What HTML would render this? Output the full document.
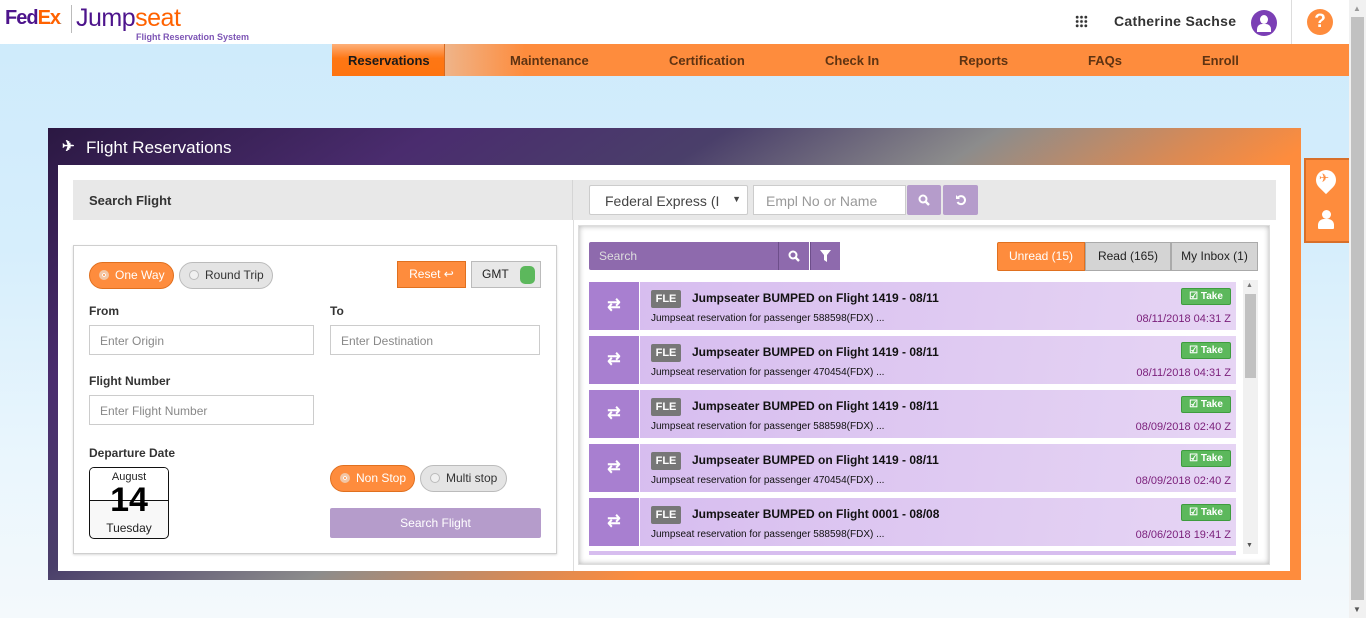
<!DOCTYPE html>
<html><head><meta charset="utf-8"><style>
*{box-sizing:border-box;margin:0;padding:0}
body{width:1366px;height:618px;overflow:hidden;font-family:"Liberation Sans",Arial,sans-serif;font-size:13px;color:#222;position:relative;background:linear-gradient(180deg,#cdeafb 0%,#d6eefc 40%,#eaf6fd 75%,#f4f9fc 100%)}
.hdr{position:absolute;left:0;top:0;width:1349px;height:44px;background:#fff}
.sb{position:absolute;left:1349px;top:0;width:17px;height:618px;background:#f1f1f1}
.sb .th{position:absolute;left:2px;top:17px;width:13px;height:583px;background:#c1c1c1}
.nav{position:absolute;left:332px;top:44px;width:1017px;height:32px;background:#fe8c3d}
.nav span{position:absolute;top:9px;font-size:13px;font-weight:bold;color:#5e3312}
.nav .act{position:absolute;left:0;top:0;width:113px;height:32px;background:linear-gradient(180deg,#fdb07a,#fe7714 45%,#fe7410);border-right:1px solid #d76a20}
.nav .fade{position:absolute;left:113px;top:0;width:80px;height:32px;background:linear-gradient(90deg,#efb489,#fe8c3d)}
.panel{position:absolute;left:48px;top:128px;width:1253px;height:452px;background:linear-gradient(147deg,#2b1842 0%,#4a2c6e 20%,#4a3f6a 35%,#8c8c8c 49%,#d98a55 60%,#fe8c3d 66%)}
.white{position:absolute;left:10px;top:37px;width:1232px;height:406px;background:#fff}
.lh{position:absolute;left:25px;top:52px;width:500px;height:40px;background:#e8e8e8;border-right:1px solid #d5d5d5}
.rh{position:absolute;left:525px;top:52px;width:703px;height:40px;background:#e8e8e8}
.lline{position:absolute;left:525px;top:92px;width:1px;height:351px;background:#ddd}
.form{position:absolute;left:73px;top:245px;width:484px;height:309px;background:#fff;border:1px solid #cfcfcf;box-shadow:0 1px 2px rgba(0,0,0,.15)}
.abs{position:absolute}
.pill{position:absolute;height:27px;border-radius:14px;font-size:12px;line-height:25px}
.po{background:#fe8c3d;border:1px solid #e0701f;color:#fff}
.pg{background:#e4e4e4;border:1px solid #bbb;color:#333}
.rad{display:inline-block;width:10px;height:10px;border-radius:50%;vertical-align:-1px;margin:0 6px 0 9px}
.po .rad{border:3px solid #f2c6a5;background:#fe8c3d;box-shadow:0 0 0 1px #fff inset}
.pg .rad{background:#f0f0f0;border:1px solid #bbb}
.lbl{position:absolute;font-size:12px;font-weight:bold;color:#333}
.inp{position:absolute;height:30px;border:1px solid #ccc;font-size:12px;color:#888;padding:8px 10px}
.inner{position:absolute;left:578px;top:225px;width:692px;height:340px;background:#fff;box-shadow:inset 0 0 6px rgba(0,0,0,.3);border:1px solid #ddd}
.msg{position:absolute;left:589px;width:647px;height:48px}
.msg .ic{position:absolute;left:0;top:0;width:50px;height:48px;background:#a87fd0;color:#fff;font-size:16px;text-align:center;line-height:48px;font-weight:bold}
.msg .bd{position:absolute;left:51px;top:0;width:596px;height:48px;background:linear-gradient(100deg,#d7bdef,#e6d5f4)}
.fle{position:absolute;left:11px;top:8px;width:30px;height:18px;background:#777;color:#fff;font-size:11px;font-weight:bold;text-align:center;line-height:18px;border-radius:2px}
.tt{position:absolute;left:52px;top:9px;font-size:12px;font-weight:bold;color:#111}
.st{position:absolute;left:11px;top:31px;font-size:10px;color:#111}
.dt{position:absolute;right:5px;top:31px;font-size:11px;color:#7a1e7a}
.tk{position:absolute;right:5px;top:6px;width:50px;height:17px;background:#5cb85c;border:1px solid #3e9c3e;color:#fff;font-size:10px;font-weight:bold;text-align:center;line-height:15px;border-radius:2px}
</style></head><body>
<div class="hdr">
 <div class="abs" style="left:5px;top:7px;font-size:20px;font-weight:bold;letter-spacing:-1px;color:#4d148c">Fed<span style="color:#ff6200">Ex</span><span style="font-size:6px;color:#999">.</span></div>
 <div class="abs" style="left:71px;top:5px;width:1px;height:28px;background:#bbb"></div>
 <div class="abs" style="left:76px;top:4px;font-size:25px;color:#4d148c;letter-spacing:-0.5px">Jump<span style="color:#ff6200">seat</span></div>
 <div class="abs" style="left:136px;top:32px;font-size:9px;font-weight:bold;color:#7d55b5">Flight Reservation System</div>
 <div class="abs" style="left:1075px;top:15px;width:13px;height:13px;background:radial-gradient(circle,#333 1.3px,transparent 1.6px) 0 0/4.33px 4.33px"></div>
 <div class="abs" style="left:1114px;top:13px;font-size:14px;font-weight:bold;color:#333;letter-spacing:.3px">Catherine Sachse</div>
 <div class="abs" style="left:1251px;top:10px;width:26px;height:26px;border-radius:50%;background:#7b3fb5;overflow:hidden"><div class="abs" style="left:9px;top:5px;width:8px;height:9px;border-radius:50%;background:#fff"></div><div class="abs" style="left:6px;top:14px;width:14px;height:8px;border-radius:5px 5px 0 0;background:#fff"></div></div>
 <div class="abs" style="left:1291px;top:0;width:1px;height:44px;background:#ddd"></div>
 <div class="abs" style="left:1307px;top:9px;width:26px;height:26px;border-radius:50%;background:#fe8c3d;color:#fff;font-weight:bold;font-size:19px;text-align:center;line-height:26px">?</div>
</div>
<div class="nav">
 <div class="act"></div><div class="fade"></div>
 <span style="left:16px;color:#1a1a1a">Reservations</span>
 <span style="left:178px">Maintenance</span>
 <span style="left:337px">Certification</span>
 <span style="left:493px">Check In</span>
 <span style="left:627px">Reports</span>
 <span style="left:756px">FAQs</span>
 <span style="left:870px">Enroll</span>
</div>
<div class="panel">
 <div class="abs" style="left:14px;top:9px;color:#fff;font-size:15px;font-weight:bold">✈</div>
 <div class="abs" style="left:38px;top:10px;color:#fff;font-size:17px">Flight Reservations</div>
 <div class="white"></div>
 <div class="lh"><div class="abs" style="left:16px;top:13px;font-size:13px;font-weight:bold;color:#333">Search Flight</div></div>
 <div class="rh"></div>
 <div class="lline"></div>
</div>
<div class="abs" style="left:589px;top:185px;width:159px;height:30px;background:#fff;border:1px solid #ccc;font-size:14px;color:#444;padding:7px 15px;border-radius:2px">Federal Express (I<span class="abs" style="right:6px;top:8px;font-size:9px">▼</span></div>
<div class="abs" style="left:753px;top:185px;width:153px;height:30px;background:#fff;border:1px solid #ccc;font-size:14px;color:#999;padding:7px 12px">Empl No or Name</div>
<div class="abs" style="left:907px;top:185px;width:34px;height:30px;background:#b59ccb;border-radius:2px"><svg class="abs" style="left:11px;top:9px" width="12" height="12" viewBox="0 0 12 12"><circle cx="5" cy="5" r="3.5" fill="none" stroke="#fff" stroke-width="2"/><path d="M7.5 7.5L11 11" stroke="#fff" stroke-width="2.4"/></svg></div>
<div class="abs" style="left:943px;top:185px;width:35px;height:30px;background:#b59ccb;border-radius:2px"><svg class="abs" style="left:12px;top:9px" width="12" height="12" viewBox="0 0 12 12"><path d="M3 3.5A4 4 0 1 1 2.5 8" fill="none" stroke="#fff" stroke-width="2"/><path d="M1 1v4h4z" fill="#fff"/></svg></div>
<div class="form"></div>
<div class="pill po" style="left:89px;top:262px;width:85px"><span class="rad"></span>One Way</div>
<div class="pill pg" style="left:179px;top:262px;width:94px"><span class="rad"></span>Round Trip</div>
<div class="abs" style="left:397px;top:261px;width:69px;height:27px;background:#fe8c3d;border:1px solid #e0701f;color:#fff;font-size:12px;text-align:center;line-height:25px">Reset ↩</div>
<div class="abs" style="left:471px;top:261px;width:70px;height:27px;background:#e8e8e8;border:1px solid #bbb;font-size:12px;line-height:25px;padding-left:10px;color:#222">GMT<span class="abs" style="left:48px;top:4px;width:15px;height:18px;border-radius:5px;background:#5cb85c"></span></div>
<div class="lbl" style="left:89px;top:304px">From</div>
<div class="lbl" style="left:330px;top:304px">To</div>
<div class="inp" style="left:89px;top:325px;width:225px">Enter Origin</div>
<div class="inp" style="left:330px;top:325px;width:210px">Enter Destination</div>
<div class="lbl" style="left:89px;top:374px">Flight Number</div>
<div class="inp" style="left:89px;top:395px;width:225px">Enter Flight Number</div>
<div class="lbl" style="left:89px;top:446px">Departure Date</div>
<div class="abs" style="left:89px;top:467px;width:80px;height:72px;border:1px solid #111;border-radius:5px;background:#f8f8f8;text-align:center;overflow:hidden">
 <div class="abs" style="left:0;top:0;width:78px;height:33px;background:#fff;border-bottom:1px solid #111"></div>
 <div class="abs" style="left:0;top:3px;width:78px;font-size:11px">August</div>
 <div class="abs" style="left:0;top:16px;width:78px;font-size:34px;font-weight:900;color:#000;line-height:32px">14</div>
 <div class="abs" style="left:0;top:53px;width:78px;font-size:12px">Tuesday</div>
</div>
<div class="pill po" style="left:330px;top:465px;width:85px"><span class="rad"></span>Non Stop</div>
<div class="pill pg" style="left:420px;top:465px;width:87px"><span class="rad"></span>Multi stop</div>
<div class="abs" style="left:330px;top:508px;width:211px;height:30px;background:#b59ccb;border-radius:2px;color:#fff;font-size:12px;text-align:center;line-height:30px">Search Flight</div>

<div class="inner"></div>
<div class="abs" style="left:589px;top:242px;width:189px;height:28px;background:#8e6aad;color:#ddd;font-size:12px;padding:7px 10px;border-radius:2px 0 0 2px">Search</div>
<div class="abs" style="left:778px;top:242px;width:31px;height:28px;background:#8e6aad;border-left:1px solid #6d4e8a"><svg class="abs" style="left:9px;top:8px" width="12" height="12" viewBox="0 0 12 12"><circle cx="5" cy="5" r="3.5" fill="none" stroke="#fff" stroke-width="2"/><path d="M7.5 7.5L11 11" stroke="#fff" stroke-width="2.4"/></svg></div>
<div class="abs" style="left:810px;top:242px;width:30px;height:28px;background:#8e6aad;border-left:1px solid #6d4e8a"><svg class="abs" style="left:9px;top:8px" width="11" height="12" viewBox="0 0 11 12"><path d="M0 0h11L7 5v7L4 10V5z" fill="#fff"/></svg></div>
<div class="abs" style="left:997px;top:242px;width:88px;height:29px;background:#fe8c3d;border:1px solid #e0701f;color:#fff;font-size:12px;text-align:center;line-height:27px;border-radius:2px 0 0 2px">Unread (15)</div>
<div class="abs" style="left:1085px;top:242px;width:86px;height:29px;background:#d4d4d4;border:1px solid #aaa;color:#222;font-size:12px;text-align:center;line-height:27px">Read (165)</div>
<div class="abs" style="left:1171px;top:242px;width:87px;height:29px;background:#d4d4d4;border:1px solid #aaa;color:#222;font-size:12px;text-align:center;line-height:27px">My Inbox (1)</div>

<div class="msg" style="top:282px"><div class="ic">⇄</div><div class="bd"><div class="fle">FLE</div><div class="tt">Jumpseater BUMPED on Flight 1419 - 08/11</div><div class="st">Jumpseat reservation for passenger 588598(FDX) ...</div><div class="dt">08/11/2018 04:31 Z</div><div class="tk">☑ Take</div></div></div>
<div class="msg" style="top:336px"><div class="ic">⇄</div><div class="bd"><div class="fle">FLE</div><div class="tt">Jumpseater BUMPED on Flight 1419 - 08/11</div><div class="st">Jumpseat reservation for passenger 470454(FDX) ...</div><div class="dt">08/11/2018 04:31 Z</div><div class="tk">☑ Take</div></div></div>
<div class="msg" style="top:390px"><div class="ic">⇄</div><div class="bd"><div class="fle">FLE</div><div class="tt">Jumpseater BUMPED on Flight 1419 - 08/11</div><div class="st">Jumpseat reservation for passenger 588598(FDX) ...</div><div class="dt">08/09/2018 02:40 Z</div><div class="tk">☑ Take</div></div></div>
<div class="msg" style="top:444px"><div class="ic">⇄</div><div class="bd"><div class="fle">FLE</div><div class="tt">Jumpseater BUMPED on Flight 1419 - 08/11</div><div class="st">Jumpseat reservation for passenger 470454(FDX) ...</div><div class="dt">08/09/2018 02:40 Z</div><div class="tk">☑ Take</div></div></div>
<div class="msg" style="top:498px"><div class="ic">⇄</div><div class="bd"><div class="fle">FLE</div><div class="tt">Jumpseater BUMPED on Flight 0001 - 08/08</div><div class="st">Jumpseat reservation for passenger 588598(FDX) ...</div><div class="dt">08/06/2018 19:41 Z</div><div class="tk">☑ Take</div></div></div>
<div class="abs" style="left:589px;top:551px;width:647px;height:4px;background:#d7bdef"></div>
<div class="abs" style="left:1243px;top:280px;width:15px;height:274px;background:#f1f1f1"><div class="abs" style="left:2px;top:14px;width:11px;height:84px;background:#c1c1c1"></div><div class="abs" style="left:3px;top:2px;font-size:7px;color:#777">▲</div><div class="abs" style="left:3px;top:262px;font-size:7px;color:#555">▼</div></div>

<div class="abs" style="left:1304px;top:158px;width:45px;height:85px;background:#fe8c3d;border:2px solid #d86f2a;border-right:none">
 <div class="abs" style="left:10px;top:10px;width:20px;height:20px;border-radius:50% 50% 50% 0;transform:rotate(-45deg);background:#fff"></div>
 <div class="abs" style="left:13px;top:11px;font-size:12px;color:#fe8c3d">✈</div>
 <div class="abs" style="left:16px;top:50px;width:9px;height:9px;border-radius:50%;background:#fff"></div>
 <div class="abs" style="left:12px;top:59px;width:16px;height:10px;border-radius:6px 6px 1px 1px;background:#fff"></div>
</div>
<div class="sb"><div class="th"></div><div class="abs" style="left:4px;top:4px;font-size:8px;color:#999">▲</div><div class="abs" style="left:4px;top:605px;font-size:8px;color:#555">▼</div></div>
</body></html>
